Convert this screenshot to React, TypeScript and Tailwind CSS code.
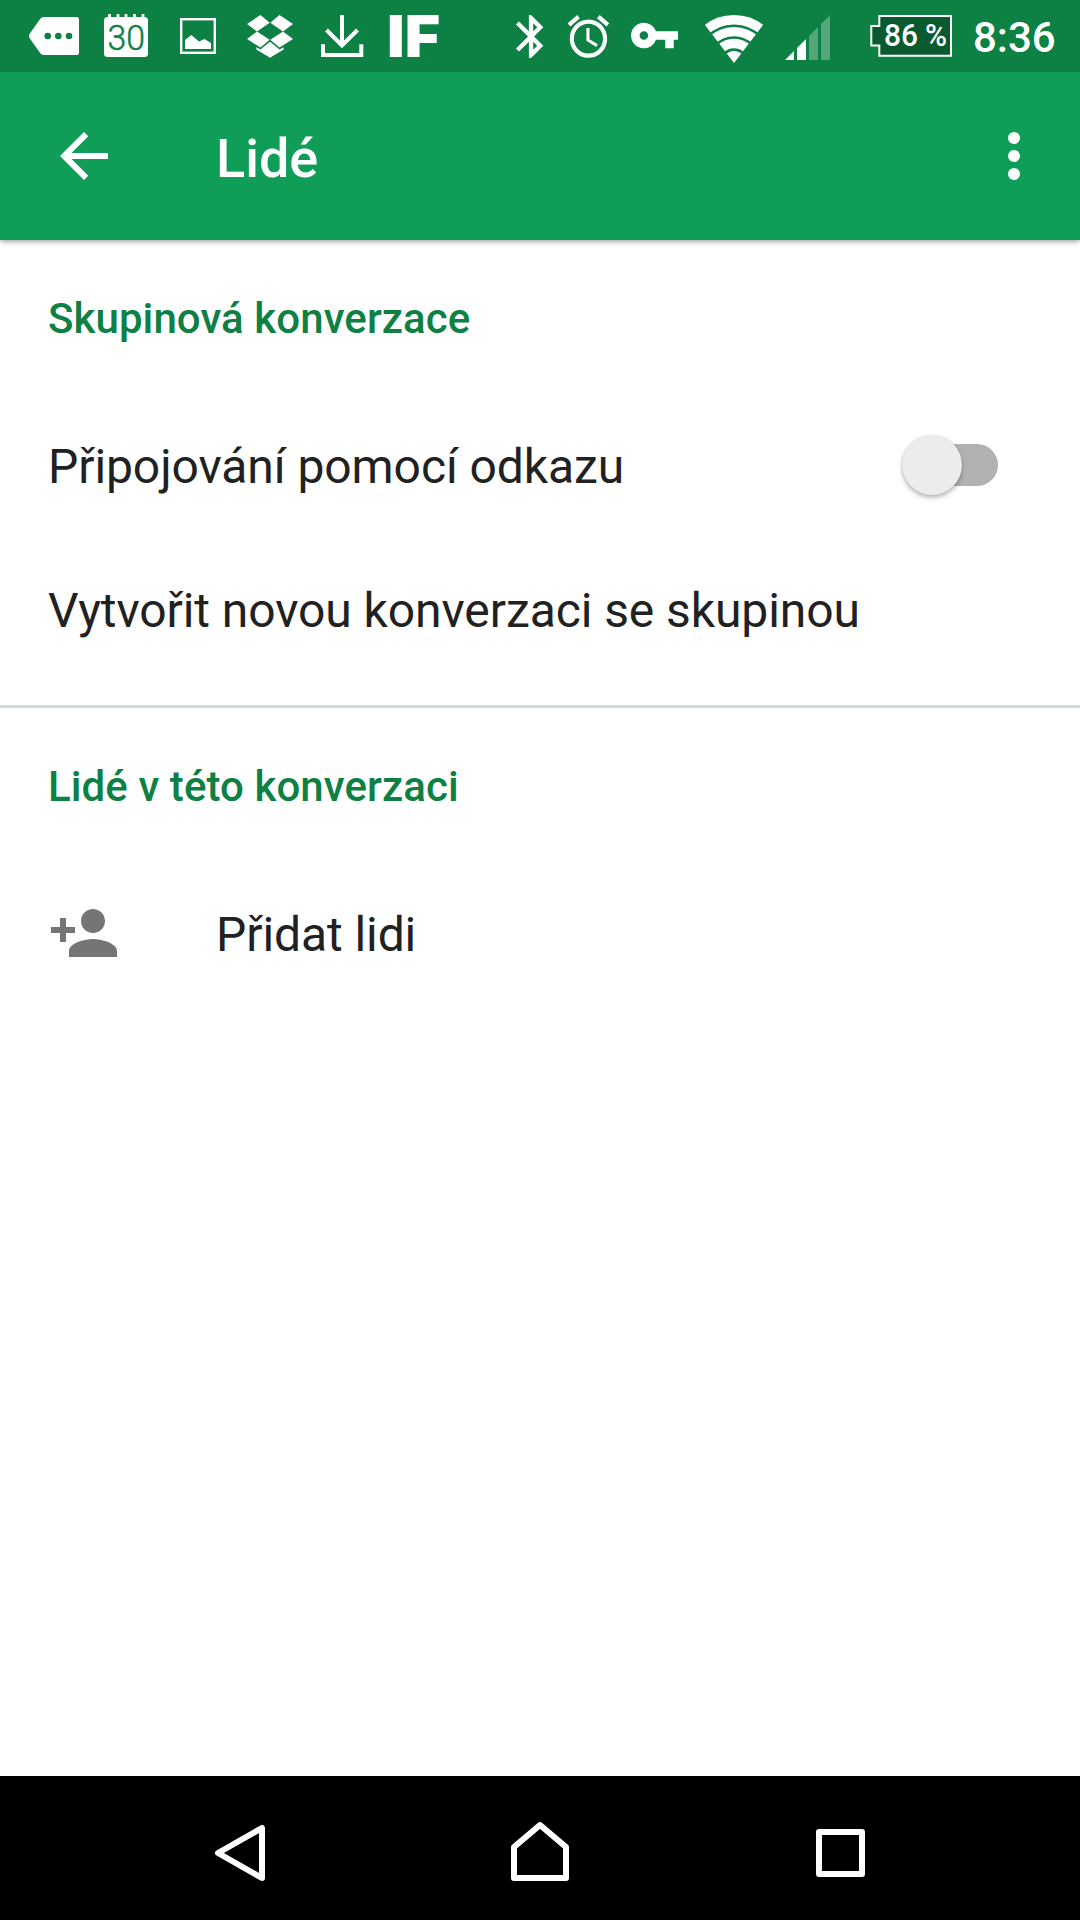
import React from "react";

const StatusBar = () => (
  <div className="relative z-10 flex h-[72px] shrink-0 items-center bg-[#0d8043] text-white">
    {/* Notifications */}
    <svg className="ml-7 h-[72px] w-[52px] shrink-0" viewBox="28 0 52 72" fill="currentColor">
      <path d="M43.500 17H76.500a2.500 2.500 0 0 1 2.500 2.500V52.500a2.500 2.500 0 0 1-2.500 2.500H43.500q-2 0-3.200-1.800L29.500 38q-1-2 0-4L40.300 18.800Q41.500 17 43.500 17z" />
      <g fill="#0d8043">
        <circle cx="47.700" cy="36" r="3.300" />
        <circle cx="58.300" cy="36" r="3.300" />
        <circle cx="69" cy="36" r="3.300" />
      </g>
    </svg>
    <svg className="ml-6 h-[72px] w-[44px] shrink-0" viewBox="104 0 44 72" fill="currentColor">
      <rect x="104" y="17" width="44" height="40" rx="3.500" />
      <path d="M109.500 14v5M118 14v5M126 14v5M134.500 14v5M143 14v5" stroke="currentColor" strokeWidth="2.800" />
      <text x="107.500" y="50" fill="#0d8043" stroke="#0d8043" strokeWidth="0.500" fontSize="34.500" fontWeight="300" fontFamily="Roboto, sans-serif" textLength="37.500" lengthAdjust="spacingAndGlyphs">30</text>
    </svg>
    <svg className="ml-8 h-[72px] w-[36px] shrink-0" viewBox="180 0 36 72" fill="currentColor">
      <rect x="181.200" y="19.200" width="33.600" height="33.600" fill="none" stroke="currentColor" strokeWidth="2.400" />
      <path d="M185 49V40l6.300-5 7.700 6.500 5.500-2.500 6.500 4V49z" />
    </svg>
    <svg className="ml-[30px] h-[72px] w-[48px] shrink-0" viewBox="246 0 48 72" fill="currentColor">
      <path d="M260.500 15l9.200 7.700L257 31.500 247 24zM279.500 15l13.500 9-10 7.500-12.700-8.800zM257 31.500l12.700 8.200-9.200 7.800-13.500-8.500zM283 31.500l10 7.500-13.500 8.500-9.200-7.800z" />
      <path d="M270 41.700l9.600 7.800 4-2.300v2.300l-13.600 8.300-13.600-8.300v-2.300l4 2.300z" />
    </svg>
    <svg className="ml-[27px] h-[72px] w-[43px] shrink-0" viewBox="321 0 43 72" fill="none" stroke="currentColor" strokeWidth="4">
      <path d="M342 15v30M326.500 30L342 45.500 357.500 30M323 44.300V55h38.300V44.300" />
    </svg>
    <svg className="ml-6 h-[72px] w-[54px] shrink-0" viewBox="388 0 54 72" fill="currentColor">
      <text x="387" y="57" fontSize="58" fontWeight="900" fontFamily="Inter, sans-serif" textLength="53" lengthAdjust="spacingAndGlyphs">IF</text>
    </svg>

    {/* System state */}
    <svg className="ml-[73px] h-[72px] w-[29px] shrink-0" viewBox="515 0 29 72" fill="currentColor">
      <path transform="translate(505.250 10.700) scale(2.150)" d="M17.710 7.710L12 2h-1v7.590L6.410 5 5 6.410 10.590 12 5 17.590 6.410 19 11 14.410V22h1l5.710-5.710-4.300-4.290 4.300-4.290zM13 5.830l1.880 1.880L13 9.590V5.830zm1.880 10.460L13 18.170v-3.760l1.880 1.880z" />
    </svg>
    <svg className="ml-[22px] h-[72px] w-[44px] shrink-0" viewBox="566 0 44 72" fill="currentColor">
      <path transform="translate(563.500 11) scale(2.080 2.130)" d="M22 5.720l-4.600-3.860-1.290 1.530 4.600 3.860L22 5.720zM7.880 3.390L6.600 1.860 2 5.710l1.290 1.530 4.590-3.850zM12.500 8H11v6l4.750 2.850.75-1.230-4-2.370V8zM12 4c-4.970 0-9 4.030-9 9s4.020 9 9 9c4.970 0 9-4.030 9-9s-4.030-9-9-9zm0 16c-3.870 0-7-3.130-7-7s3.130-7 7-7 7 3.130 7 7-3.130 7-7 7z" />
    </svg>
    <svg className="ml-5 h-[72px] w-[50px] shrink-0" viewBox="630 0 50 72" fill="currentColor">
      <path transform="translate(628.900 9.900) scale(2.136)" d="M12.650 10C11.830 7.670 9.610 6 7 6c-3.310 0-6 2.690-6 6s2.690 6 6 6c2.610 0 4.830-1.670 5.650-4H17v4h4v-4h2v-4H12.650zM7 14c-1.100 0-2-.9-2-2s.9-2 2-2 2 .9 2 2-.9 2-2 2z" />
    </svg>
    <svg className="ml-6 h-[72px] w-[60px] shrink-0" viewBox="704 0 60 72" fill="none" stroke="currentColor">
      <clipPath id="wifi-fan">
        <path d="M734 63L696 13.200V5h76v8.200z" />
      </clipPath>
      <g clipPath="url(#wifi-fan)">
        <circle cx="734" cy="63" r="43.300" strokeWidth="9.400" />
        <circle cx="734" cy="63" r="31.400" strokeWidth="9.400" />
        <circle cx="734" cy="63" r="19.500" strokeWidth="9.400" />
        <circle cx="734" cy="63" r="12" fill="currentColor" stroke="none" />
      </g>
    </svg>
    <svg className="ml-5 h-[72px] w-[48px] shrink-0" viewBox="784 0 48 72" fill="currentColor">
      <path d="M785 60l9-9v9zM797 48l9-9v21h-9z" />
      <path opacity=".3" d="M809 36l9-9v33h-9zM821 24l9-9v45h-9z" />
    </svg>
    <svg className="ml-9 h-[72px] w-[86px] shrink-0" viewBox="868 0 86 72" fill="currentColor">
      <path d="M879.300 16h71.700v39.700h-71.700V45.500h-8V26h8z" fill="#0a5a2f" stroke="currentColor" strokeWidth="2" />
      <g fontWeight="500" fontFamily="Roboto, sans-serif">
        <text x="884" y="46.300" fontSize="31" textLength="34" lengthAdjust="spacingAndGlyphs">86</text>
        <text x="925" y="46.300" fontSize="31" textLength="22" lengthAdjust="spacingAndGlyphs">%</text>
      </g>
    </svg>
    <span className="ml-[19px] pt-1 text-[42px] leading-[68px] font-medium">8:36</span>
  </div>
);

const AppBar = () => (
  <header className="relative flex h-[168px] shrink-0 items-center bg-[#0f9d58] px-[30px] text-white shadow-[0_1px_6px_rgba(0,0,0,0.45)]">
    <svg className="ml-[18px] size-[72px]" viewBox="0 0 24 24" fill="currentColor">
      <path d="M20 11H7.830l5.590-5.590L12 4l-8 8 8 8 1.410-1.410L7.830 13H20v-2z" />
    </svg>
    <h1 className="ml-24 flex-1 pt-1.5 text-[54px] leading-[64px] font-medium">Lidé</h1>
    <svg className="size-[72px]" viewBox="0 0 24 24" fill="currentColor">
      <circle cx="12" cy="6" r="2" />
      <circle cx="12" cy="12" r="2" />
      <circle cx="12" cy="18" r="2" />
    </svg>
  </header>
);

const SectionTitle = ({ children }: { children: React.ReactNode }) => (
  <h2 className="flex h-[153px] items-center px-12 pt-1 text-[42px] leading-[50px] font-medium tracking-[0.08px] text-[#0d8043]">
    {children}
  </h2>
);

const Row = ({ icon, label, children }: { icon?: React.ReactNode; label: string; children?: React.ReactNode }) => (
  <div className="flex h-36 items-center px-12 text-[48px] text-[#212121]">
    {icon && <div className="mr-24">{icon}</div>}
    <span className="flex-1 pt-[3px] leading-[56px] tracking-[-0.08px]">{label}</span>
    {children}
  </div>
);

const Switch = () => (
  <div className="relative mr-[34px] h-[42px] w-[90px] rounded-full bg-[#b1b1b1]">
    <div className="absolute -top-[9px] -left-[6px] size-[60px] rounded-full bg-[#ececec] shadow-[0_3px_4px_rgba(0,0,0,0.25),0_0_2px_rgba(0,0,0,0.15)]" />
  </div>
);

const NavBar = () => (
  <nav className="flex h-36 shrink-0 items-center bg-black text-white">
    <svg className="ml-[210px] h-[72px] w-[60px]" viewBox="210 1812 60 72" fill="none" stroke="currentColor" strokeWidth="6" strokeLinejoin="round">
      <path d="M262 1828v50l-44-25z" />
    </svg>
    <svg className="ml-[240px] h-[72px] w-[60px]" viewBox="510 1812 60 72" fill="none" stroke="currentColor" strokeWidth="6" strokeLinejoin="round">
      <path d="M514 1878v-31l26-22 26 22v31z" />
    </svg>
    <svg className="ml-[240px] h-[72px] w-[60px]" viewBox="810 1812 60 72" fill="none" stroke="currentColor" strokeWidth="6" strokeLinejoin="round">
      <path d="M819 1832h43v42h-43z" />
    </svg>
  </nav>
);

export default function App() {
  return (
    <div className="flex h-[1920px] w-[1080px] flex-col overflow-hidden bg-white font-['Roboto',sans-serif]">
      <StatusBar />
      <AppBar />
      <main className="flex-1">
        <section className="border-b-[3px] border-[#cfd8dc] pb-6">
          <SectionTitle>Skupinová konverzace</SectionTitle>
          <Row label="Připojování pomocí odkazu">
            <Switch />
          </Row>
          <Row label="Vytvořit novou konverzaci se skupinou" />
        </section>
        <section>
          <SectionTitle>Lidé v této konverzaci</SectionTitle>
          <Row
            label="Přidat lidi"
            icon={
              <svg className="size-[72px]" viewBox="0 0 24 24" fill="#757575">
                <path d="M15 12c2.210 0 4-1.790 4-4s-1.790-4-4-4-4 1.790-4 4 1.790 4 4 4zm-9-2V7H4v3H1v2h3v3h2v-3h3v-2H6zm9 4c-2.670 0-8 1.340-8 4v2h16v-2c0-2.660-5.330-4-8-4z" />
              </svg>
            }
          />
        </section>
      </main>
      <NavBar />
    </div>
  );
}
